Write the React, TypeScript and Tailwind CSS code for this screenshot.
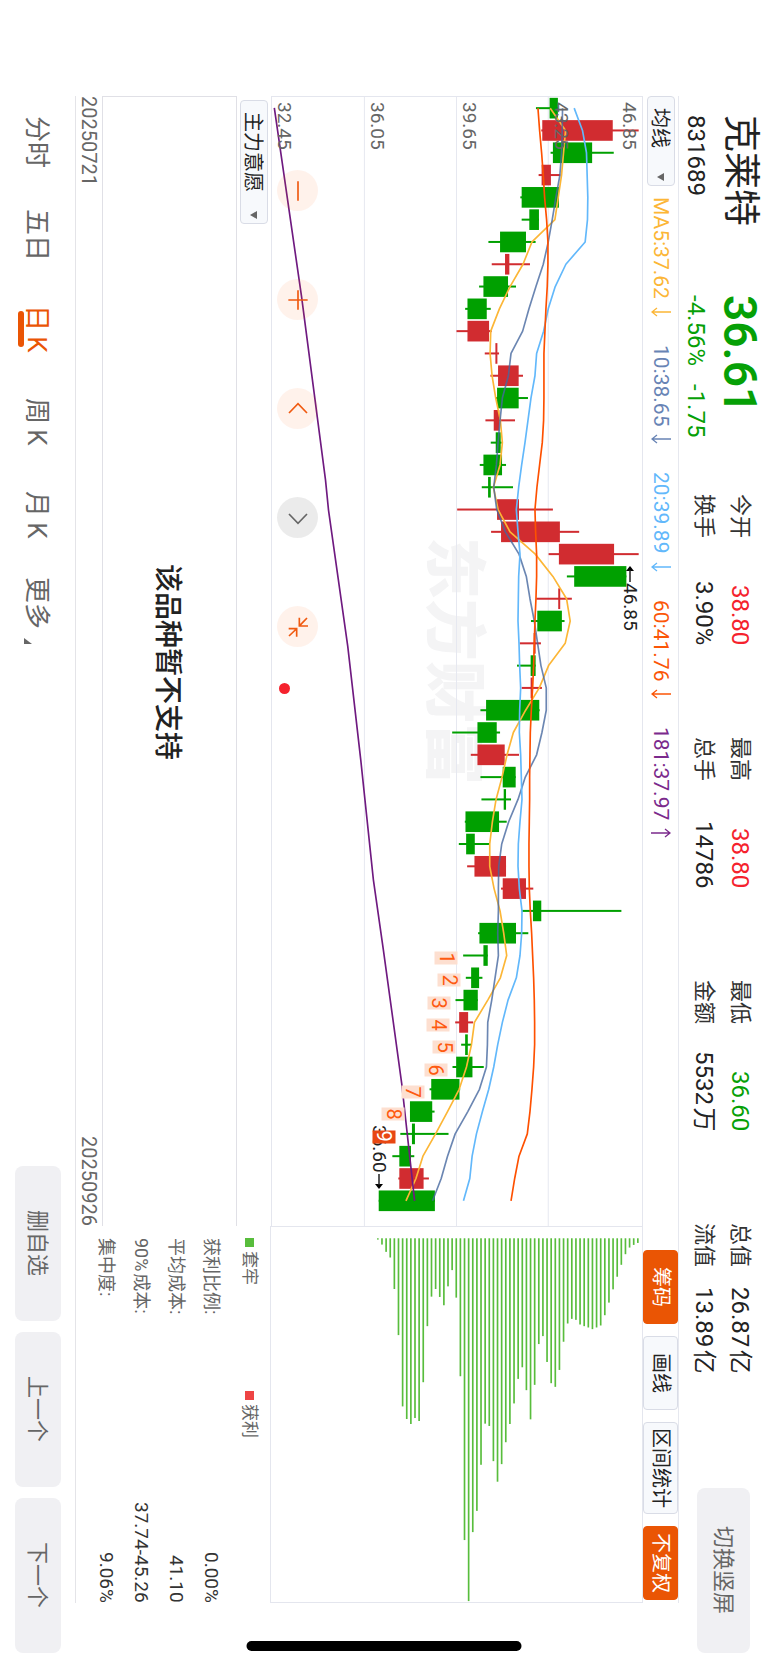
import React from "react";

type Candle = [low: number, bodyLow: number, bodyHigh: number, high: number, color: "r" | "g"];

const CANDLES: Candle[] = [
  [459, 500, 525, 525, "g"], [475, 478, 690, 768, "r"], [503, 510, 628, 693, "g"], [467, 476, 504, 532, "r"],
  [412, 416, 528, 528, "g"], [416, 439, 468, 468, "g"], [316, 351, 429, 458, "g"], [326, 366, 379, 441, "r"],
  [288, 301, 375, 399, "g"], [246, 253, 311, 323, "g"], [220, 253, 318, 326, "r"], [305, 337, 343, 348, "r"],
  [322, 345, 407, 420, "r"], [338, 342, 407, 435, "g"], [307, 332, 349, 396, "r"], [323, 338, 353, 356, "g"],
  [290, 301, 357, 369, "g"], [296, 315, 323, 390, "g"], [222, 342, 408, 510, "r"], [324, 354, 531, 589, "r"],
  [497, 528, 694, 768, "r"], [552, 574, 731, 731, "g"], [460, 526, 532, 567, "r"], [444, 463, 537, 545, "g"],
  [410, 452, 458, 474, "r"], [402, 443, 458, 458, "g"], [416, 443, 449, 477, "r"], [292, 309, 469, 470, "g"],
  [207, 283, 341, 351, "g"], [263, 283, 365, 408, "r"], [292, 359, 398, 398, "g"], [295, 362, 369, 384, "g"],
  [245, 247, 348, 371, "g"], [227, 249, 275, 320, "g"], [252, 274, 369, 369, "r"], [354, 359, 429, 451, "r"],
  [416, 450, 475, 716, "g"], [285, 289, 399, 436, "g"], [240, 301, 314, 314, "g"], [248, 264, 288, 298, "g"],
  [217, 241, 284, 284, "g"], [216, 228, 255, 270, "r"], [234, 246, 254, 266, "g"], [208, 219, 268, 302, "g"],
  [139, 144, 229, 231, "g"], [80, 80, 147, 154, "g"], [51, 86, 95, 196, "g"], [27, 48, 83, 93, "g"],
  [45, 48, 121, 137, "r"], [-14, -14, 155, 155, "g"],
];

const MA5 = [502, 548, 542, 536, 526, 516, 447, 420, 381, 349, 323, 321, 327, 338, 352, 358, 351, 331, 345, 381, 457, 510, 551, 562, 547, 497, 469, 428, 391, 372, 357, 339, 328, 320, 320, 333, 351, 362, 371, 352, 314, 274, 265, 250, 228, 193, 157, 119, 98, 68];
const MA10 = [539, 538, 536, 531, 519, 508, 496, 481, 459, 438, 419, 384, 376, 358, 351, 345, 340, 332, 341, 367, 408, 430, 441, 454, 464, 474, 490, 490, 477, 461, 427, 405, 377, 356, 347, 346, 346, 344, 346, 336, 326, 314, 313, 310, 289, 254, 216, 193, 174, 148];
const MA20 = [574, 599, 611, 613, 615, 614, 607, 549, 517, 496, 482, 461, 456, 444, 435, 426, 416, 407, 400, 405, 411, 407, 406, 405, 408, 410, 413, 410, 409, 413, 415, 417, 411, 406, 405, 409, 417, 416, 411, 400, 375, 358, 344, 332, 317, 298, 280, 267, 260, 241];
const MA60 = [465, 470, 476, 481, 485, 491, 495, 495, 493, 489, 486, 483, 483, 483, 482, 478, 470, 462, 456, 458, 461, 461, 459, 456, 454, 452, 449, 445, 442, 441, 440, 440, 439, 438, 438, 439, 442, 446, 449, 452, 454, 455, 455, 452, 447, 441, 433, 408, 395, 384];

const CHIPS = [68, 74, 82, 102, 134, 170, 208, 248, 286, 317, 323, 328, 323, 319, 314, 300, 297, 311, 366, 451, 502, 491, 427, 349, 373, 496, 600, 512, 443, 478, 552, 614, 669, 735, 788, 726, 620, 613, 737, 876, 940, 1148, 964, 470, 233, 150, 199, 256, 231, 207, 230, 319, 488, 605, 596, 614, 599, 561, 346, 207, 112, 95, 73, 58];

const MIN = -338;
const SPAN = 1116;
const LENGTH = 3390;
const dayAt = (i: number) => 33.5 + 66.94 * i;
const linePoints = (values: number[]) => values.map((v, i) => `${v},${dayAt(i)}`).join(" ");
const place = (value: number, along: number) => ({
  left: `${((value - MIN) / SPAN) * 100}%`,
  top: `${(along / LENGTH) * 100}%`,
});

const AXIS = [
  { text: "46.85", at: 739 },
  { text: "43.25", at: 533 },
  { text: "39.65", at: 257 },
  { text: "36.05", at: -22 },
  { text: "32.45", at: -301 },
];

const QUOTES = [
  [["今开", "38.80", "text-[#f5222d]"], ["换手", "3.90%", "text-[#222]"]],
  [["最高", "38.80", "text-[#f5222d]"], ["总手", "14786", "text-[#222]"]],
  [["最低", "36.60", "text-[#06a006]"], ["金额", "5532\u200a万", "text-[#222]"]],
  [["总值", "26.87\u200a亿", "text-[#222]"], ["流值", "13.89\u200a亿", "text-[#222]"]],
];

const AVERAGES = [
  { text: "MA5:37.62", color: "text-[#fcb636]", up: false },
  { text: "10:38.65", color: "text-[#6884b5]", up: false },
  { text: "20:39.89", color: "text-[#62b8fb]", up: false },
  { text: "60:41.76", color: "text-[#fb5607]", up: false },
  { text: "181:37.97", color: "text-[#7b2a8c]", up: true },
];

const TOOLS = [
  { text: "筹码", active: true },
  { text: "画线", active: false },
  { text: "区间统计", active: false },
  { text: "不复权", active: true },
];

const CHIP_INFO = [
  ["获利比例:", "0.00%"],
  ["平均成本:", "41.10"],
  ["90%\u200a成本:", "37.74-45.26"],
  ["集中度:", "9.06%"],
];

const TABS = ["分时", "五日", "日\u2009K", "周\u2009K", "月\u2009K", "更多"];

const CONTROLS = [
  { label: "缩小", path: "M30 1V59", muted: false },
  { label: "放大", path: "M30 1V59M1 30H59", muted: false },
  { label: "左移", path: "M3 42L30 14L57 42", muted: false },
  { label: "右移", path: "M3 18L30 46L57 18", muted: true },
  { label: "收起", path: "M34 2V27H60M57 3L35 26M2 35H26V59M25 36L3 57", muted: false },
];

function Picker({ label, value, size }: { label: string; value: string; size: string }) {
  return (
    <div className={`relative w-7 ${size}`}>
      <select
        aria-label={label}
        className="h-full w-full appearance-none rounded-sm border border-[#d9dce6] bg-[#f7f9fc] pt-[11px] pr-[3px] text-[20px] leading-[22px] text-[#222] [text-orientation:sideways] [writing-mode:vertical-rl]"
      >
        <option>{value}</option>
      </select>
      <svg viewBox="0 0 8 8" className="pointer-events-none absolute bottom-[5px] left-[10px] h-2 w-2" aria-hidden="true">
        <path d="M0 4L7 0V8Z" fill="#666" />
      </svg>
    </div>
  );
}

function Header() {
  return (
    <header className="flex w-[89px] shrink-0 pt-[115px] pr-[10px] pb-3">
      <div className="flex h-[180px] shrink-0 flex-col gap-[11px]">
        <h1 className="text-[37px] leading-9 text-[#222]">克莱特</h1>
        <p className="text-[24px] leading-[30px] text-[#222]">831689</p>
      </div>
      <div className="flex h-[199px] shrink-0 flex-col gap-[11px] text-[#06a006]">
        <strong className="text-[46px] leading-9 font-semibold">36.61</strong>
        <p className="flex gap-[18px] text-[24px] leading-[30px]">
          <span>-4.56%</span>
          <span>-1.75</span>
        </p>
      </div>
      <div className="flex gap-[92px]">
        {QUOTES.map((group, g) => (
          <dl key={g} className="flex h-[151px] flex-col leading-9">
            {group.map(([label, value, color]) => (
              <div key={label} className="flex justify-between">
                <dt className="text-[22px] text-[#333]">{label}</dt>
                <dd className={`text-[24px] ${color}`}>{value}</dd>
              </div>
            ))}
          </dl>
        ))}
      </div>
      <button className="mt-auto mr-2 h-[165px] w-[53px] rounded-lg bg-[#f0f0f3] text-center text-[22px] text-[#666]">切换竖屏</button>
    </header>
  );
}

function Toolbar() {
  return (
    <div className="flex w-9 shrink-0 items-center justify-between border-r border-[#e6e8ef] pb-[3px]">
      <div className="flex items-center gap-[11px]">
        <Picker label="指标" value="均线" size="h-[90px]" />
        <div className="flex gap-[28px] text-[21px] leading-[30px]">
          {AVERAGES.map((a) => (
            <span key={a.text} className={`flex items-center gap-2 ${a.color}`}>
              {a.text}
              <svg viewBox="0 0 20 10" className="h-[10px] w-5" fill="none" stroke="currentColor" strokeWidth="1.3" aria-hidden="true">
                <path d={a.up ? "M0 5H19M14 1L19 5L14 9" : "M20 5H1M6 1L1 5L6 9"} />
              </svg>
            </span>
          ))}
        </div>
      </div>
      <div className="flex gap-3">
        {TOOLS.map((t) => (
          <button
            key={t.text}
            className={`min-h-[74px] w-[35px] rounded-sm border px-[5px] py-0 text-center text-[20px] leading-7 ${
              t.active ? "border-[#ea5504] bg-[#ea5504] text-white" : "border-[#d9dce6] bg-[#f7f9fc] text-[#222]"
            }`}
          >
            {t.text}
          </button>
        ))}
      </div>
    </div>
  );
}

function PriceChart() {
  return (
    <section className="relative min-w-0 flex-1 border-t border-r border-l border-[#e4e6ee]">
      <span className="absolute top-[440px] left-[147px] text-[62px] leading-[68px] font-black whitespace-nowrap text-[#f4f4f5]">东方财富</span>
      <svg viewBox={`${MIN} 0 ${SPAN} ${LENGTH}`} preserveAspectRatio="none" className="absolute inset-y-0 left-0 h-full w-[calc(100%+1px)]" aria-label="日K线图">
        <g stroke="#e6e8f0" strokeWidth="3">
          <path d={`M-57 0V${LENGTH}M220 0V${LENGTH}M496 0V${LENGTH}`} />
        </g>
        {CANDLES.map(([low, bodyLow, bodyHigh, high, color], i) => (
          <g key={i} fill={color === "r" ? "#d12c30" : "#00a000"}>
            <rect x={low} y={dayAt(i) - 3} width={high - low} height="6" />
            <rect x={bodyLow} y={dayAt(i) - 31} width={bodyHigh - bodyLow} height="62" />
          </g>
        ))}
        <g fill="none" strokeWidth="5" strokeLinejoin="round">
          <polyline points={linePoints(MA5)} stroke="#fcb636" />
          <polyline points={linePoints(MA10)} stroke="#46689f" strokeOpacity="0.8" />
          <polyline points={linePoints(MA20)} stroke="#62b8fb" />
          <polyline points={linePoints(MA60)} stroke="#fe5000" />
          <polyline points="-328,33 -246,600 -174,1150 -165,1240 -107,1650 -68,1990 -30,2350 0,2560 55,2960 94,3314" stroke="#6f1a80" />
        </g>
      </svg>
      {AXIS.map((a) => (
        <span key={a.text} className="absolute -translate-x-1/2 text-[19px] leading-5 text-[#666]" style={place(a.at, 15)}>
          {a.text}
        </span>
      ))}
      <span className="absolute flex -translate-x-1/2 items-center text-[19px] leading-5 text-[#222]" style={place(743, 1408)}>
        <svg viewBox="0 0 8 17" className="h-[17px] w-2" aria-hidden="true">
          <path d="M4 0L8 5H0Z" />
          <path d="M4 4V16" stroke="#222" strokeWidth="1.5" />
        </svg>
        46.85
      </span>
      <span className="absolute flex -translate-x-1/2 items-center text-[19px] leading-5 text-[#222]" style={place(-15, 3085)}>
        36.60
        <svg viewBox="0 0 8 17" className="h-[17px] w-2" aria-hidden="true">
          <path d="M4 17L8 12H0Z" />
          <path d="M4 2V13" stroke="#222" strokeWidth="1.5" />
        </svg>
      </span>
      {CANDLES.slice(38, 47).map(([low], n) => (
        <span
          key={n}
          className={`absolute flex h-[13px] w-[23px] -translate-x-1/2 -translate-y-1/2 items-center justify-center text-[20px] leading-[23px] ${
            n === 8 ? "bg-[#e84712] text-white" : "bg-[#fddfd0] text-[#fe5a10]"
          }`}
          style={place(low - 52, dayAt(38 + n) + 8)}
        >
          {n + 1}
        </span>
      ))}
      <div className="absolute top-[73px] left-[5px] flex gap-[68px]">
        {CONTROLS.map((c) => (
          <button
            key={c.label}
            aria-label={c.label}
            className={`flex h-[41px] w-[41px] items-center justify-center rounded-full ${c.muted ? "bg-black/8 text-[#666]" : "bg-[#ff5500]/8 text-[#f05a10]"}`}
          >
            <svg viewBox="0 0 60 60" className="h-5 w-5" fill="none" stroke="currentColor" strokeWidth="5" aria-hidden="true">
              <path d={c.path} />
            </svg>
          </button>
        ))}
      </div>
      <i className="absolute top-[586px] left-[7px] h-[11px] w-[11px] rounded-full bg-[#f5222d]" />
    </section>
  );
}

function ChipPanel() {
  return (
    <aside className="flex min-h-0 flex-1 flex-col">
      <div className="relative min-w-0 flex-1 border border-[#e4e6ee]">
        <svg viewBox={`${MIN} 0 ${SPAN} 1130`} preserveAspectRatio="none" className="absolute inset-y-0 left-0 h-full w-[calc(100%+1px)]" aria-label="筹码分布">
          {CHIPS.map((end, i) => (
            <rect key={i} x={763 - 12.38 * i} y="34" width="5" height={end - 54} fill="#58bd3c" />
          ))}
        </svg>
      </div>
      <div className="flex w-[41px] shrink-0 gap-[106px] pt-3 text-[17px] leading-[38px] text-[#666]">
        <span className="flex items-center gap-1"><i className="h-[9px] w-[9px] bg-[#58bd3c]" />套牢</span>
        <span className="flex items-center gap-1"><i className="h-[9px] w-[9px] bg-[#ee4444]" />获利</span>
      </div>
      <dl className="flex w-[153px] shrink-0 flex-col pt-3">
        {CHIP_INFO.map(([label, value]) => (
          <div key={label} className="flex w-[35px] items-center justify-between leading-[35px]">
            <dt className="text-[18px] text-[#666]">{label}</dt>
            <dd className="text-[19px] text-[#333]">{value}</dd>
          </div>
        ))}
      </dl>
    </aside>
  );
}

function BottomBar() {
  return (
    <nav className="flex w-[75px] shrink-0 items-center justify-between pt-24 pb-3">
      <div className="flex">
        {TABS.map((t, i) => (
          <button key={t} className={`relative flex h-[93px] w-10 items-center justify-center pr-[2px] text-[26px] leading-9 last:pb-2 ${i === 2 ? "text-[#ea5504]" : "text-[#666]"}`}>
            {t}
            {i === 2 && <i className="absolute left-0 h-9 w-[6px] rounded-full bg-[#ea5504]" />}
            {i === 5 && (
              <svg viewBox="0 0 8 6" className="absolute bottom-[10px] left-[6px] h-[6px] w-2" aria-hidden="true">
                <path d="M0 0L8 6H0Z" fill="#666" />
              </svg>
            )}
          </button>
        ))}
      </div>
      <div className="flex gap-[11px]">
        {["删自选", "上一个", "下一个"].map((t) => (
          <button key={t} className="h-[155px] w-[46px] rounded-lg bg-[#f0f0f3] text-center text-[22px] text-[#666]">
            {t}
          </button>
        ))}
      </div>
    </nav>
  );
}

export default function App() {
  return (
    <div className="relative flex h-screen w-full flex-col overflow-hidden bg-white [font-family:Roboto,'Noto_Sans_CJK_SC',sans-serif] [text-orientation:sideways] [writing-mode:vertical-rl]">
      <Header />
      <main className="flex min-w-0 flex-1 flex-col pt-24 pb-[62px]">
        <Toolbar />
        <div className="flex min-w-0 flex-1 border-l border-[#e4e4e8]">
          <div className="flex min-h-0 flex-[3] flex-col">
            <PriceChart />
            <div className="flex w-[34px] shrink-0 items-center pt-1">
              <Picker label="副图指标" value="主力意愿" size="h-[124px]" />
            </div>
            <section className="flex w-[135px] shrink-0 items-center justify-center border border-b-0 border-[#e0e0e6] pr-[5px]">
              <p className="text-[28px] font-medium text-[#222]">该品种暂不支持</p>
            </section>
            <div className="flex w-[26px] shrink-0 justify-between text-[20px] leading-[26px] text-[#666]">
              <time>20250721</time>
              <time>20250926</time>
            </div>
          </div>
          <ChipPanel />
        </div>
      </main>
      <BottomBar />
      <i className="absolute bottom-[14px] left-1/2 h-[10px] w-[275px] -translate-x-1/2 rounded-full bg-black" />
    </div>
  );
}
